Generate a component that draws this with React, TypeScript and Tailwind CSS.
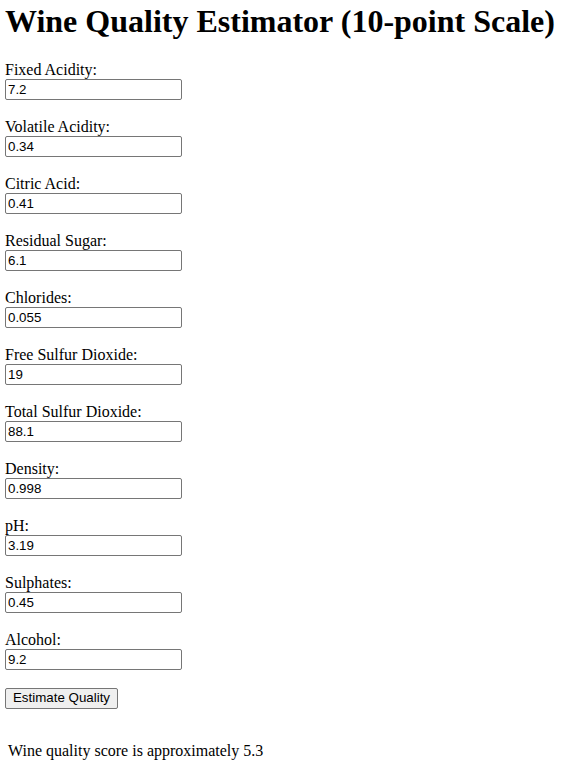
import { useState } from "react";

const fields = [
  { key: "fixedAcidity", label: "Fixed Acidity:", value: "7.2" },
  { key: "volatileAcidity", label: "Volatile Acidity:", value: "0.34" },
  { key: "citricAcid", label: "Citric Acid:", value: "0.41" },
  { key: "residualSugar", label: "Residual Sugar:", value: "6.1" },
  { key: "chlorides", label: "Chlorides:", value: "0.055" },
  { key: "freeSulfur", label: "Free Sulfur Dioxide:", value: "19" },
  { key: "totalSulfur", label: "Total Sulfur Dioxide:", value: "88.1" },
  { key: "density", label: "Density:", value: "0.998" },
  { key: "ph", label: "pH:", value: "3.19" },
  { key: "sulphates", label: "Sulphates:", value: "0.45" },
  { key: "alcohol", label: "Alcohol:", value: "9.2" },
];

export default function App() {
  const [values, setValues] = useState<Record<string, string>>(
    Object.fromEntries(fields.map((f) => [f.key, f.value]))
  );

  return (
    <div className="min-h-[772px] bg-white px-[5px] pt-[3px] text-black font-['Liberation_Serif','Times_New_Roman',serif]">
      <h1 className="text-[32px] font-bold leading-[normal] mb-[20.5px]">
        Wine Quality Estimator (10-point Scale)
      </h1>
      <form onSubmit={(e) => e.preventDefault()}>
        {fields.map((field) => (
          <div key={field.key} className="mb-[18px]">
            <label htmlFor={field.key} className="block text-[16px] leading-[18px]">
              {field.label}
            </label>
            <input
              id={field.key}
              type="text"
              value={values[field.key]}
              onChange={(e) => setValues({ ...values, [field.key]: e.target.value })}
              className="block w-[177px] h-[21px] px-[2px] border border-[#767676] rounded-[2px] bg-white text-[13.33px] font-['Liberation_Sans',Arial,sans-serif] outline-none"
            />
          </div>
        ))}
        <button
          type="submit"
          className="block h-[21px] w-[113px] border border-[#767676] rounded-[2px] bg-[#efefef] text-[13.33px] font-['Liberation_Sans',Arial,sans-serif] leading-none"
        >
          Estimate Quality
        </button>
      </form>
      <p className="mt-[33px] pl-[3px] text-[16px] leading-[18px]">
        Wine quality score is approximately 5.3
      </p>
    </div>
  );
}
